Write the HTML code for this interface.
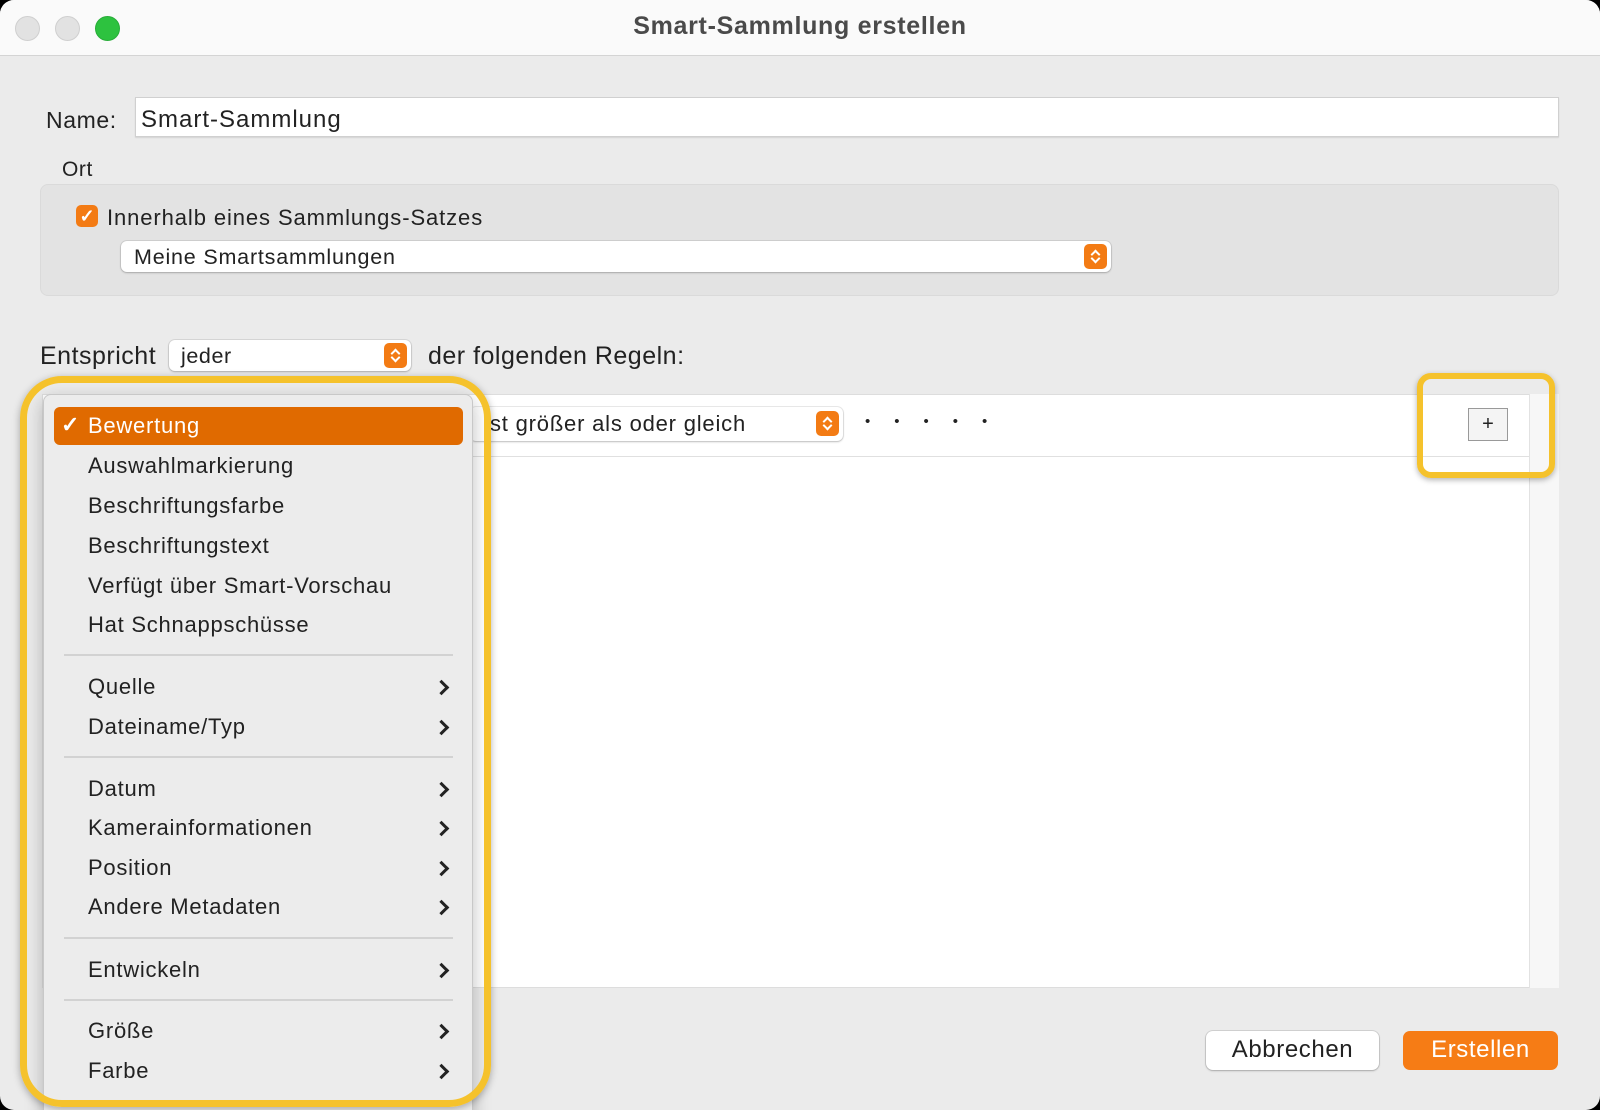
<!DOCTYPE html>
<html><head><meta charset="utf-8"><style>
*{box-sizing:border-box;margin:0;padding:0}
body{width:1600px;height:1110px;background:#000;font-family:"Liberation Sans",sans-serif;color:#222;position:relative;overflow:hidden}
.win{position:absolute;left:0;top:0;width:1600px;height:1110px;background:#ebebeb;border-radius:14px;overflow:hidden}
.tb{position:absolute;left:0;top:0;width:1600px;height:56px;background:#fafafa;border-bottom:1px solid #d4d4d4}
.dot{position:absolute;top:16px;width:25px;height:25px;border-radius:50%;background:#e2e2e2;border:1px solid #cfcfcf}
.title{position:absolute;top:12px;left:0;width:1600px;text-align:center;font-weight:bold;font-size:25px;letter-spacing:.7px;color:#4a4a4a}
.a{position:absolute;white-space:nowrap}
.t{font-size:22px;letter-spacing:.6px}
.field{background:#fff;border:1px solid #d0d0d0;box-shadow:0 1px 1px rgba(0,0,0,.1)}
.pop{background:#fff;border-radius:6px;box-shadow:0 0 0 1px rgba(0,0,0,.08),0 1px 2px rgba(0,0,0,.2)}
.step{position:absolute;width:23px;height:25px;border-radius:5px;background:#f37b14}
.step:before,.step:after{content:"";position:absolute;left:8px;width:5px;height:5px;border:solid #fff;border-width:2px 2px 0 0}
.step:before{top:7px;transform:rotate(-45deg)}
.step:after{top:11px;transform:rotate(135deg)}
.item{position:absolute;left:88px;font-size:22px;letter-spacing:.75px;color:#222;white-space:nowrap}
.chev{position:absolute;left:436px;width:11px;height:11px;border:solid #222;border-width:3px 3px 0 0;transform:rotate(45deg)}
.sep{position:absolute;left:64px;width:389px;height:2px;background:#d2d2d2}
</style></head><body>
<div class="win">
<div class="tb">
<div class="dot" style="left:15px"></div>
<div class="dot" style="left:55px"></div>
<div class="dot" style="left:95px;background:#2dc23f;border-color:#27ad38"></div>
<div class="title">Smart-Sammlung erstellen</div>
</div>

<div class="a t" style="left:46px;top:107px;font-size:23px">Name:</div>
<div class="a field" style="left:135px;top:97px;width:1424px;height:40px"></div>
<div class="a t" style="left:141px;top:106px;font-size:24px;letter-spacing:1px">Smart-Sammlung</div>

<div class="a t" style="left:62px;top:158px;font-size:21px">Ort</div>
<div class="a" style="left:40px;top:184px;width:1519px;height:112px;background:#e3e3e3;border-radius:8px;border:1px solid #dadada"></div>
<div class="a" style="left:76px;top:205px;width:22px;height:22px;background:#f37b14;border-radius:5px;color:#fff;font-size:18px;text-align:center;line-height:22px;font-weight:bold">✓</div>
<div class="a t" style="left:107px;top:205px;font-size:22px;letter-spacing:.9px">Innerhalb eines Sammlungs-Satzes</div>
<div class="a pop" style="left:121px;top:241px;width:990px;height:31px"></div>
<div class="a t" style="left:134px;top:245px;font-size:21.5px;letter-spacing:.8px">Meine Smartsammlungen</div>
<div class="step" style="left:1084px;top:244px"></div>

<div class="a t" style="left:40px;top:342px;font-size:25px;letter-spacing:.5px">Entspricht</div>
<div class="a pop" style="left:169px;top:340px;width:242px;height:31px"></div>
<div class="a t" style="left:181px;top:344px;font-size:21.5px">jeder</div>
<div class="step" style="left:384px;top:343px"></div>
<div class="a t" style="left:428px;top:342px;font-size:25px;letter-spacing:.5px">der folgenden Regeln:</div>

<div class="a" style="left:42px;top:394px;width:1517px;height:594px;background:#fff;border:1px solid #ddd"></div>
<div class="a" style="left:1529px;top:394px;width:30px;height:594px;background:#f7f7f7;border-left:1px solid #e2e2e2"></div>
<div class="a" style="left:42px;top:456px;width:1487px;height:1px;background:#e0e0e0"></div>
<div class="a pop" style="left:470px;top:407px;width:373px;height:34px"></div>
<div class="a t" style="left:490px;top:411px;font-size:22px;letter-spacing:.8px">st größer als oder gleich</div>
<div class="step" style="left:816px;top:411px"></div>
<div class="a" style="left:865px;top:413px;font-size:15px;letter-spacing:24px">•••••</div>
<div class="a" style="left:1468px;top:408px;width:40px;height:33px;background:#f4f4f4;border:1px solid #999;text-align:center;line-height:30px;font-size:20px">+</div>
<div class="a" style="left:1417px;top:373px;width:138px;height:105px;border:6px solid #f5c22c;border-radius:14px;box-shadow:0 2px 6px rgba(0,0,0,.3)"></div>

<div class="a" style="left:1206px;top:1031px;width:173px;height:39px;background:#fff;border-radius:7px;box-shadow:0 0 0 1px rgba(0,0,0,.1),0 1px 2px rgba(0,0,0,.2)"></div>
<div class="a" style="left:1206px;top:1036px;width:173px;text-align:center;font-size:24px;letter-spacing:.6px">Abbrechen</div>
<div class="a" style="left:1403px;top:1031px;width:155px;height:39px;background:#f67c15;border-radius:7px"></div>
<div class="a" style="left:1403px;top:1036px;width:155px;text-align:center;font-size:24px;letter-spacing:.6px;color:#fff">Erstellen</div>

<div class="a" style="left:43px;top:394px;width:430px;height:740px;background:#ececec;border:1px solid #c8c8c8;border-radius:8px;box-shadow:0 6px 18px rgba(0,0,0,.25)"></div>
<div class="a" style="left:54px;top:407px;width:409px;height:38px;background:#e06a00;border-radius:6px"></div>
<div class="a" style="left:61px;top:412px;font-size:22px;color:#fff;font-weight:bold">✓</div>
<div class="item" style="top:413px;color:#fff">Bewertung</div>
<div class="item" style="top:453px">Auswahlmarkierung</div>
<div class="item" style="top:493px">Beschriftungsfarbe</div>
<div class="item" style="top:533px">Beschriftungstext</div>
<div class="item" style="top:573px">Verfügt über Smart-Vorschau</div>
<div class="item" style="top:612px">Hat Schnappschüsse</div>
<div class="sep" style="top:654px"></div>
<div class="item" style="top:674px">Quelle</div><div class="chev" style="top:682px"></div>
<div class="item" style="top:714px">Dateiname/Typ</div><div class="chev" style="top:722px"></div>
<div class="sep" style="top:756px"></div>
<div class="item" style="top:776px">Datum</div><div class="chev" style="top:784px"></div>
<div class="item" style="top:815px">Kamerainformationen</div><div class="chev" style="top:823px"></div>
<div class="item" style="top:855px">Position</div><div class="chev" style="top:863px"></div>
<div class="item" style="top:894px">Andere Metadaten</div><div class="chev" style="top:902px"></div>
<div class="sep" style="top:937px"></div>
<div class="item" style="top:957px">Entwickeln</div><div class="chev" style="top:965px"></div>
<div class="sep" style="top:999px"></div>
<div class="item" style="top:1018px">Größe</div><div class="chev" style="top:1026px"></div>
<div class="item" style="top:1058px">Farbe</div><div class="chev" style="top:1066px"></div>
<div class="a" style="left:20px;top:376px;width:471px;height:731px;border:7px solid #f5c22c;border-radius:42px;box-shadow:0 2px 8px rgba(0,0,0,.3)"></div>
</div>
</body></html>
